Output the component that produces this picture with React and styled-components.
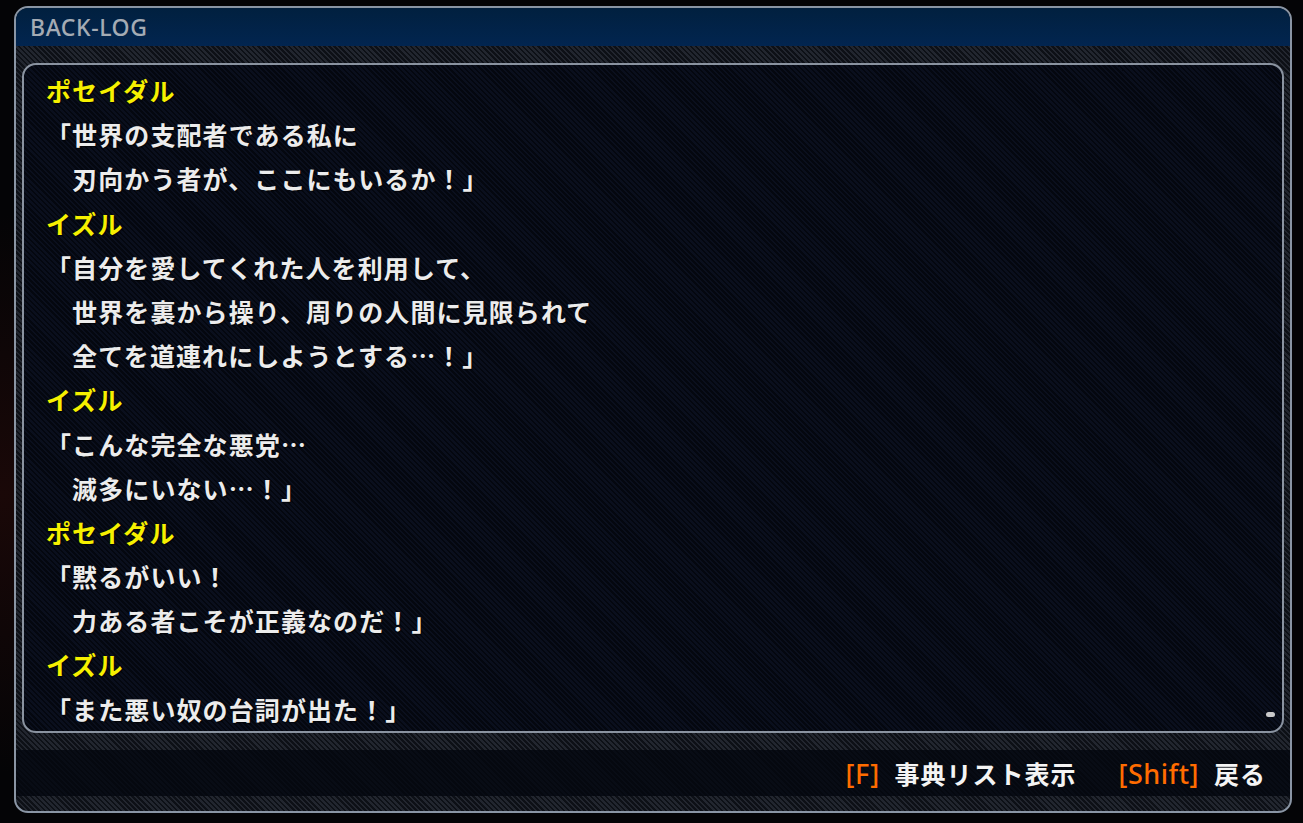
import React from 'react';
import styled, { createGlobalStyle } from 'styled-components';

const GlobalStyle = createGlobalStyle`
  html, body {
    margin: 0;
    padding: 0;
    background: #040406;
  }
  body {
    font-family: "Noto Sans CJK JP", "Noto Sans", sans-serif;
  }
`;

// diagonal stripes used everywhere on the window chrome
const stripes = (a, b) => `repeating-linear-gradient(45deg, ${a} 0 1.8px, ${b} 1.8px 3.6px)`;

const Screen = styled.div`
  width: 1303px;
  height: 823px;
  padding: 6px 11px 10px 14px;
  box-sizing: border-box;
  background: radial-gradient(ellipse at 0% 60%, #1a0808 0%, #040406 40%), #040406;
`;

const Frame = styled.div`
  height: 100%;
  box-sizing: border-box;
  border: 2px solid #8a95a4;
  border-radius: 14px;
  overflow: hidden;
  display: flex;
  flex-direction: column;
  background: ${stripes('#22262f', '#0d1016')};
`;

const Header = styled.div`
  height: 38px;
  flex-shrink: 0;
  display: flex;
  align-items: center;
  padding-left: 14px;
  background: linear-gradient(180deg, #01203f 0%, #022550 100%);
`;

const Title = styled.div`
  font-family: "Noto Sans", "Open Sans", sans-serif;
  font-weight: 500;
  font-size: 23px;
  letter-spacing: 0.6px;
  color: #a4abb4;
  margin-top: -1px;
`;

const Panel = styled.div`
  position: relative;
  margin: 17px 6px 0;
  height: 670px;
  box-sizing: border-box;
  border: 2px solid #8a93a0;
  border-radius: 14px;
  padding: 3px 22px 0;
  background: ${stripes('#0a0f1d', '#04070f')};
`;

const Line = styled.div`
  font-size: 25px;
  letter-spacing: 1.1px;
  line-height: 44.2px;
  height: 44.2px;
  font-weight: 700;
  white-space: pre;
  color: ${(p) => (p.$name ? '#f6f000' : '#ececec')};
  text-shadow: 1px 1px 1px rgba(0, 0, 0, 0.7);
`;

const ScrollDot = styled.div`
  position: absolute;
  right: 7px;
  bottom: 14px;
  width: 9px;
  height: 5px;
  border-radius: 3px;
  background: #c9c9c9;
`;

const Footer = styled.div`
  flex: 1;
  display: flex;
  flex-direction: column;
  padding: 17px 0 15px;
`;

const FooterBand = styled.div`
  flex: 1;
  display: flex;
  align-items: center;
  justify-content: flex-end;
  padding-right: 24px;
  gap: 42px;
  background: ${stripes('#080c15', '#05080f')};
`;

const Hint = styled.div`
  display: flex;
  align-items: center;
  gap: 15px;
  font-size: 25px;
  font-weight: 700;
  color: #f4f4f4;
  letter-spacing: 1px;
`;

const Key = styled.span`
  color: #ff6c00;
  font-family: "Noto Sans", sans-serif;
  font-size: 27px;
  font-weight: 500;
  letter-spacing: 0.5px;
`;

const log = [
  { name: 'ポセイダル', lines: ['「世界の支配者である私に', '　刃向かう者が、ここにもいるか！」'] },
  { name: 'イズル', lines: ['「自分を愛してくれた人を利用して、', '　世界を裏から操り、周りの人間に見限られて', '　全てを道連れにしようとする…！」'] },
  { name: 'イズル', lines: ['「こんな完全な悪党…', '　滅多にいない…！」'] },
  { name: 'ポセイダル', lines: ['「黙るがいい！', '　力ある者こそが正義なのだ！」'] },
  { name: 'イズル', lines: ['「また悪い奴の台詞が出た！」'] },
];

export default function App() {
  return (
    <>
      <GlobalStyle />
      <Screen>
        <Frame>
          <Header>
            <Title>BACK-LOG</Title>
          </Header>
          <Panel>
            {log.map((entry, i) => (
              <React.Fragment key={i}>
                <Line $name>{entry.name}</Line>
                {entry.lines.map((l, j) => (
                  <Line key={j}>{l}</Line>
                ))}
              </React.Fragment>
            ))}
            <ScrollDot />
          </Panel>
          <Footer>
            <FooterBand>
              <Hint>
                <Key>[F]</Key>事典リスト表示
              </Hint>
              <Hint>
                <Key>[Shift]</Key>戻る
              </Hint>
            </FooterBand>
          </Footer>
        </Frame>
      </Screen>
    </>
  );
}
